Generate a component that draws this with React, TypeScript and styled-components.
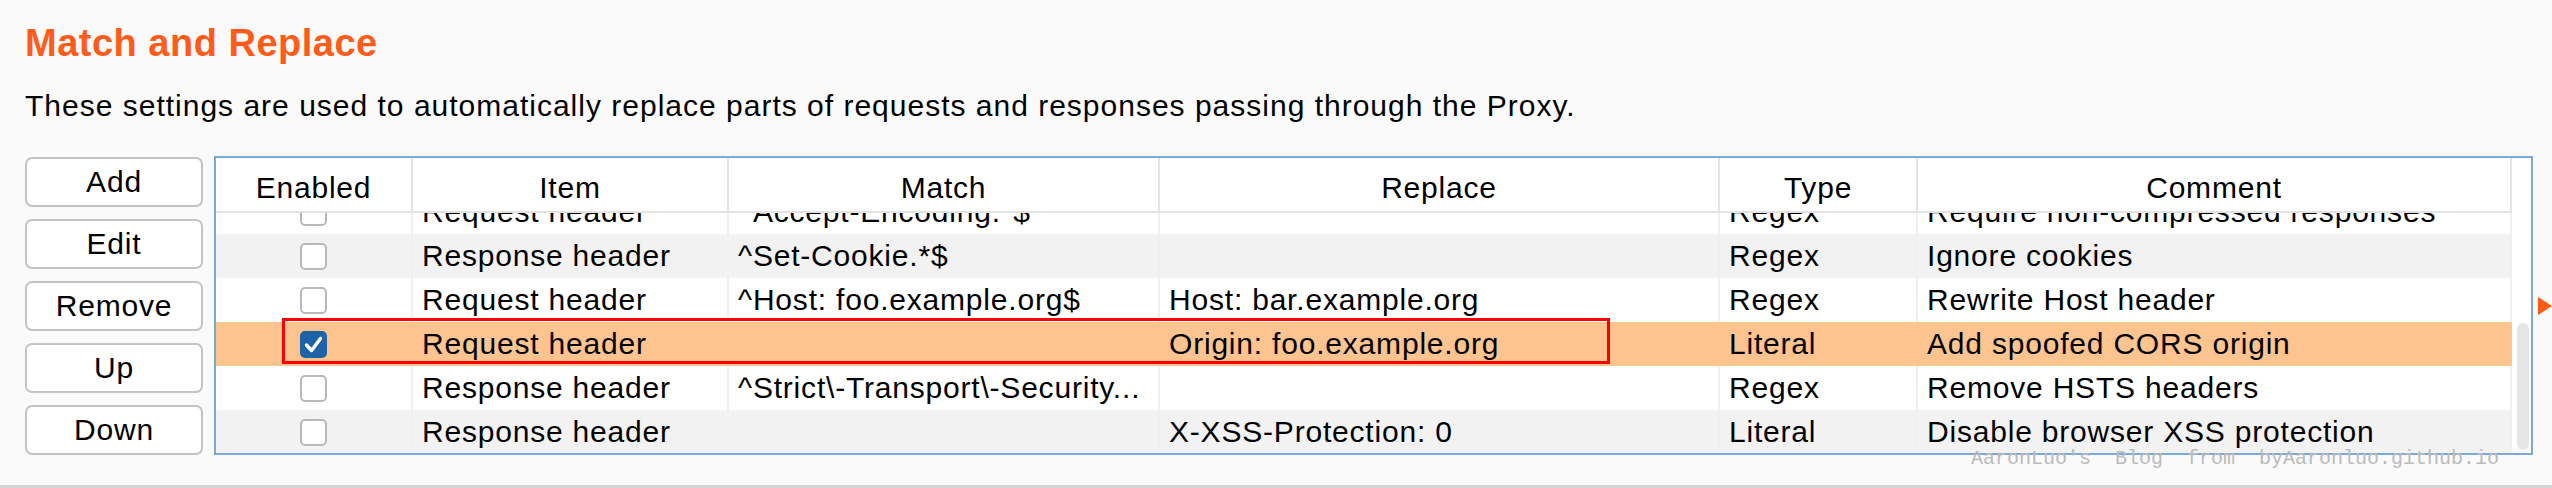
import React from "react";
import styled, { createGlobalStyle } from "styled-components";

const COLUMNS = "197px 316px 431px 560px 198px 594px";

const GlobalStyle = createGlobalStyle`
  html, body {
    margin: 0;
    padding: 0;
    background: #fafafa;
  }
  body {
    font-family: "Liberation Sans", Arial, sans-serif;
    color: #000;
  }
`;

const Page = styled.div`
  position: relative;
  box-sizing: border-box;
  height: 488px;
  padding: 20px 0 0 25px;
  background: #fafafa;
  border-bottom: 3px solid #d4d4d4;
  overflow: hidden;
`;

const Title = styled.h1`
  margin: 0;
  font-size: 38px;
  line-height: 46px;
  font-weight: bold;
  letter-spacing: 0.5px;
  color: #ff5b1a;
`;

const Description = styled.p`
  margin: 20px 0 0;
  font-size: 30px;
  line-height: 40px;
  letter-spacing: 1px;
`;

const Content = styled.div`
  display: flex;
  align-items: flex-start;
  margin-top: 30px;
`;

const ButtonColumn = styled.div`
  display: flex;
  flex-direction: column;
  gap: 12px;
  width: 178px;
  margin: 1px 11px 0 0;
`;

const Button = styled.button`
  box-sizing: border-box;
  height: 50px;
  padding: 0;
  background: #fff;
  border: 2px solid #c3c3c3;
  border-radius: 7px;
  font-family: "Liberation Sans", Arial, sans-serif;
  font-size: 30px;
  line-height: 46px;
  letter-spacing: 0.8px;
  color: #000;
`;

const TableFrame = styled.div`
  box-sizing: border-box;
  display: flex;
  width: 2319px;
  height: 299px;
  background: #fff;
  border: 2px solid #7aaadc;
`;

const Grid = styled.div`
  display: flex;
  flex-direction: column;
  width: 2296px;
`;

const HeaderRow = styled.div`
  display: grid;
  grid-template-columns: ${COLUMNS};
  height: 55px;
  box-sizing: border-box;
  border-bottom: 2px solid #e3e3e3;
`;

const HeaderCell = styled.div`
  padding-top: 6px;
  line-height: 47px;
  font-size: 30px;
  letter-spacing: 0.8px;
  text-align: center;
  border-right: 2px solid #e3e3e3;
`;

const Body = styled.div`
  height: 240px;
  overflow: hidden;
`;

const Rows = styled.div`
  margin-top: -23px;
`;

const Row = styled.div<{ $stripe: boolean; $selected: boolean }>`
  position: relative;
  display: grid;
  grid-template-columns: ${COLUMNS};
  height: 44px;
  background: ${(p) => (p.$selected ? "#fec48f" : p.$stripe ? "#f2f2f2" : "#fff")};
`;

const Cell = styled.div<{ $selected: boolean; $center?: boolean }>`
  display: flex;
  align-items: center;
  justify-content: ${(p) => (p.$center ? "center" : "flex-start")};
  padding: 0 9px;
  overflow: hidden;
  white-space: nowrap;
  font-size: 30px;
  line-height: 44px;
  letter-spacing: 0.8px;
  border-right: 2px solid ${(p) => (p.$selected ? "transparent" : "#f0f0f0")};
`;

const Box = styled.div<{ $checked: boolean }>`
  box-sizing: border-box;
  width: 27px;
  height: 27px;
  border-radius: 5px;
  background: ${(p) => (p.$checked ? "#1d63a6" : "#fff")};
  border: 2px solid ${(p) => (p.$checked ? "#1d63a6" : "#b8b8b8")};
  display: flex;
  align-items: center;
  justify-content: center;
`;

const Highlight = styled.div`
  position: absolute;
  top: -4px;
  left: 66px;
  width: 1328px;
  height: 46px;
  box-sizing: border-box;
  border: 3px solid #ff0000;
  pointer-events: none;
`;

const Gutter = styled.div`
  flex: 1;
  display: flex;
  flex-direction: column;
  justify-content: flex-end;
  align-items: center;
  padding: 0 0 3px 2px;
`;

const Thumb = styled.div`
  width: 12px;
  height: 127px;
  border-radius: 6px;
  background: #e6e6e6;
`;

const Marker = styled.div`
  align-self: center;
  width: 0;
  height: 0;
  margin-left: 5px;
  border-left: 14px solid #ff5a14;
  border-top: 9.5px solid transparent;
  border-bottom: 9.5px solid transparent;
`;

const Watermark = styled.div`
  position: absolute;
  left: 1971px;
  top: 449px;
  font-family: "Liberation Mono", "Courier New", monospace;
  font-size: 20px;
  line-height: 20px;
  white-space: pre;
  color: #bbbbbb;
`;

type Rule = {
  enabled: boolean;
  item: string;
  match: string;
  replace: string;
  type: string;
  comment: string;
};

const rules: Rule[] = [
  { enabled: false, item: "Request header", match: "^Accept-Encoding.*$", replace: "", type: "Regex", comment: "Require non-compressed responses" },
  { enabled: false, item: "Response header", match: "^Set-Cookie.*$", replace: "", type: "Regex", comment: "Ignore cookies" },
  { enabled: false, item: "Request header", match: "^Host: foo.example.org$", replace: "Host: bar.example.org", type: "Regex", comment: "Rewrite Host header" },
  { enabled: true, item: "Request header", match: "", replace: "Origin: foo.example.org", type: "Literal", comment: "Add spoofed CORS origin" },
  { enabled: false, item: "Response header", match: "^Strict\\-Transport\\-Security...", replace: "", type: "Regex", comment: "Remove HSTS headers" },
  { enabled: false, item: "Response header", match: "", replace: "X-XSS-Protection: 0", type: "Literal", comment: "Disable browser XSS protection" },
];

const SELECTED = 3;

const Checkbox = ({ checked }: { checked: boolean }) => (
  <Box $checked={checked}>
    {checked && (
      <svg width="23" height="23" viewBox="0 0 23 23">
        <path d="M4.5 12 L9.5 17.5 L18.5 5.5" fill="none" stroke="#fff" strokeWidth="3.5" strokeLinecap="round" strokeLinejoin="round" />
      </svg>
    )}
  </Box>
);

const App = () => {
  return (
    <Page>
      <GlobalStyle />
      <Title>Match and Replace</Title>
      <Description>
        These settings are used to automatically replace parts of requests and responses passing through the Proxy.
      </Description>
      <Content>
        <ButtonColumn>
          <Button>Add</Button>
          <Button>Edit</Button>
          <Button>Remove</Button>
          <Button>Up</Button>
          <Button>Down</Button>
        </ButtonColumn>
        <TableFrame>
          <Grid>
            <HeaderRow>
              <HeaderCell>Enabled</HeaderCell>
              <HeaderCell>Item</HeaderCell>
              <HeaderCell>Match</HeaderCell>
              <HeaderCell>Replace</HeaderCell>
              <HeaderCell>Type</HeaderCell>
              <HeaderCell>Comment</HeaderCell>
            </HeaderRow>
            <Body>
              <Rows>
                {rules.map((r, i) => {
                  const sel = i === SELECTED;
                  return (
                    <Row key={i} $stripe={i % 2 === 1} $selected={sel}>
                      <Cell $selected={sel} $center>
                        <Checkbox checked={r.enabled} />
                      </Cell>
                      <Cell $selected={sel}>{r.item}</Cell>
                      <Cell $selected={sel}>{r.match}</Cell>
                      <Cell $selected={sel}>{r.replace}</Cell>
                      <Cell $selected={sel}>{r.type}</Cell>
                      <Cell $selected={sel}>{r.comment}</Cell>
                      {sel && <Highlight />}
                    </Row>
                  );
                })}
              </Rows>
            </Body>
          </Grid>
          <Gutter>
            <Thumb />
          </Gutter>
        </TableFrame>
        <Marker />
      </Content>
      <Watermark>{"AaronLuo's  Blog  from  byAaronluo.github.io"}</Watermark>
    </Page>
  );
};

export default App;
